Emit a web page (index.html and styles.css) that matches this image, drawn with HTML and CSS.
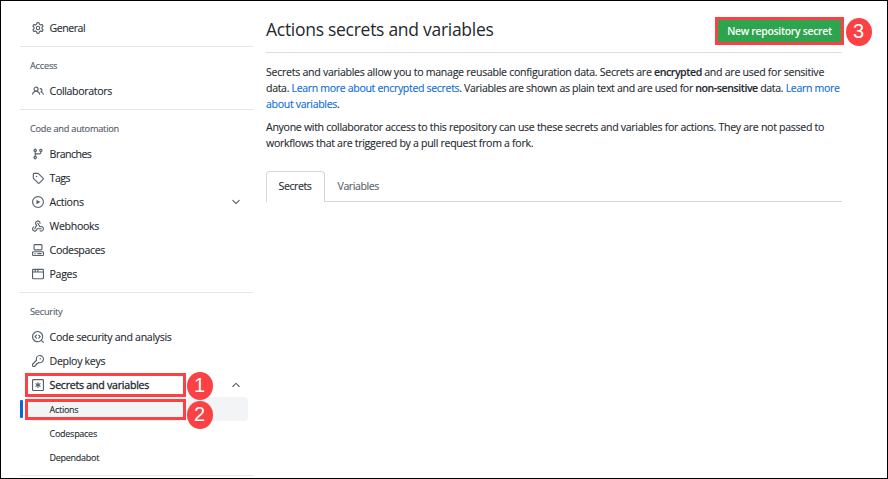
FILE: index.html
```html
<!DOCTYPE html>
<html lang="en">
<head>
<meta charset="utf-8">
<title>Actions secrets and variables</title>
<link rel="stylesheet" href="styles.css">
</head>
<body>
<div class="page">
  <nav class="sidebar">
    <ul class="list">
      <li class="item"><svg class="icon" viewBox="0 0 16 16"><path d="M8 0a8.2 8.2 0 0 1 .701.031C9.444.095 9.99.645 10.16 1.29l.288 1.107c.018.066.079.158.212.224.231.114.454.243.668.386.123.082.233.09.299.071l1.103-.303c.644-.176 1.392.021 1.82.63.27.385.506.792.704 1.218.315.675.111 1.422-.364 1.891l-.814.806c-.049.048-.098.147-.088.294.016.257.016.515 0 .772-.01.147.038.246.088.294l.814.806c.475.469.679 1.216.364 1.891a7.977 7.977 0 0 1-.704 1.217c-.428.61-1.176.807-1.82.63l-1.102-.302c-.067-.019-.177-.011-.3.071a5.909 5.909 0 0 1-.668.386c-.133.066-.194.158-.211.224l-.29 1.106c-.168.646-.715 1.196-1.458 1.26a8.006 8.006 0 0 1-1.402 0c-.743-.064-1.289-.614-1.458-1.26l-.289-1.106c-.018-.066-.079-.158-.212-.224a5.738 5.738 0 0 1-.668-.386c-.123-.082-.233-.09-.299-.071l-1.103.303c-.644.176-1.392-.021-1.82-.63a8.12 8.12 0 0 1-.704-1.218c-.315-.675-.111-1.422.363-1.891l.815-.806c.05-.048.098-.147.088-.294a6.214 6.214 0 0 1 0-.772c.01-.147-.038-.246-.088-.294l-.815-.806C.635 6.045.431 5.298.746 4.623a7.92 7.92 0 0 1 .704-1.217c.428-.61 1.176-.807 1.82-.63l1.102.302c.067.019.177.011.3-.071.214-.143.437-.272.668-.386.133-.066.194-.158.211-.224l.29-1.106C6.009.645 6.556.095 7.299.03 7.53.01 7.764 0 8 0Zm-.571 1.525c-.036.003-.108.036-.137.146l-.289 1.105c-.147.561-.549.967-.998 1.189-.173.086-.34.183-.5.29-.417.278-.97.423-1.529.27l-1.103-.303c-.109-.03-.175.016-.195.045-.22.312-.412.644-.573.99-.014.031-.021.11.059.19l.815.806c.411.406.562.957.53 1.456a4.709 4.709 0 0 0 0 .582c.032.499-.119 1.05-.53 1.456l-.815.806c-.081.08-.073.159-.059.19.162.346.353.677.573.989.02.03.085.076.195.046l1.102-.303c.56-.153 1.113-.008 1.53.27.161.107.328.204.501.29.447.222.85.629.997 1.189l.289 1.105c.029.109.101.143.137.146a6.6 6.6 0 0 0 1.142 0c.036-.003.108-.036.137-.146l.289-1.105c.147-.561.549-.967.998-1.189.173-.086.34-.183.5-.29.417-.278.97-.423 1.529-.27l1.103.303c.109.029.175-.016.195-.045.22-.313.411-.644.573-.99.014-.031.021-.11-.059-.19l-.815-.806c-.411-.406-.562-.957-.53-1.456a4.709 4.709 0 0 0 0-.582c-.032-.499.119-1.05.53-1.456l.815-.806c.081-.08.073-.159.059-.19a6.464 6.464 0 0 0-.573-.989c-.02-.03-.085-.076-.195-.046l-1.102.303c-.56.153-1.113.008-1.53-.27a4.44 4.44 0 0 0-.501-.29c-.447-.222-.85-.629-.997-1.189l-.289-1.105c-.029-.11-.101-.143-.137-.146a6.6 6.6 0 0 0-1.142 0ZM11 8a3 3 0 1 1-6 0 3 3 0 0 1 6 0ZM9.5 8a1.5 1.5 0 1 0-3.001.001A1.5 1.5 0 0 0 9.5 8Z"/></svg><span class="label t-general">General</span></li>
    </ul>
    <section class="group">
      <h2 class="heading t-access">Access</h2>
      <ul class="list">
        <li class="item"><svg class="icon" viewBox="0 0 16 16"><path d="M2 5.5a3.5 3.5 0 1 1 5.898 2.549 5.508 5.508 0 0 1 3.034 4.084.75.75 0 1 1-1.482.235 4 4 0 0 0-7.9 0 .75.75 0 0 1-1.482-.236A5.507 5.507 0 0 1 3.102 8.05 3.493 3.493 0 0 1 2 5.5ZM11 4a3.001 3.001 0 0 1 2.22 5.018 5.01 5.01 0 0 1 2.56 3.012.749.749 0 0 1-.885.954.752.752 0 0 1-.549-.514 3.507 3.507 0 0 0-2.522-2.372.75.75 0 0 1-.574-.73v-.352a.75.75 0 0 1 .416-.672A1.5 1.5 0 0 0 11 5.5.75.75 0 0 1 11 4Zm-5.5-.5a2 2 0 1 0-.001 3.999A2 2 0 0 0 5.5 3.5Z"/></svg><span class="label t-collab">Collaborators</span></li>
      </ul>
    </section>
    <section class="group">
      <h2 class="heading t-code">Code and automation</h2>
      <ul class="list">
        <li class="item"><svg class="icon" viewBox="0 0 16 16"><path d="M9.5 3.25a2.25 2.25 0 1 1 3 2.122V6A2.5 2.5 0 0 1 10 8.5H6a1 1 0 0 0-1 1v1.128a2.251 2.251 0 1 1-1.5 0V5.372a2.25 2.25 0 1 1 1.5 0v1.836A2.493 2.493 0 0 1 6 7h4a1 1 0 0 0 1-1v-.628A2.25 2.25 0 0 1 9.5 3.25Zm-6 0a.75.75 0 1 0 1.5 0 .75.75 0 0 0-1.5 0Zm8.25-.75a.75.75 0 1 0 0 1.5.75.75 0 0 0 0-1.5ZM4.25 12a.75.75 0 1 0 0 1.5.75.75 0 0 0 0-1.5Z"/></svg><span class="label t-branches">Branches</span></li>
        <li class="item"><svg class="icon" viewBox="0 0 16 16"><path d="M1 7.775V2.75C1 1.784 1.784 1 2.75 1h5.025c.464 0 .91.184 1.238.513l6.25 6.25a1.75 1.75 0 0 1 0 2.474l-5.026 5.026a1.75 1.75 0 0 1-2.474 0l-6.25-6.25A1.752 1.752 0 0 1 1 7.775Zm1.5 0c0 .066.026.13.073.177l6.25 6.25a.25.25 0 0 0 .354 0l5.025-5.025a.25.25 0 0 0 0-.354l-6.25-6.25a.25.25 0 0 0-.177-.073H2.75a.25.25 0 0 0-.25.25ZM6 5a1 1 0 1 1 0 2 1 1 0 0 1 0-2Z"/></svg><span class="label t-tags">Tags</span></li>
        <li class="item"><svg class="icon" viewBox="0 0 16 16"><path d="M8 0a8 8 0 1 1 0 16A8 8 0 0 1 8 0ZM1.5 8a6.5 6.5 0 1 0 13 0 6.5 6.5 0 0 0-13 0Zm4.879-2.773 4.264 2.559a.25.25 0 0 1 0 .428l-4.264 2.559A.25.25 0 0 1 6 10.559V5.442a.25.25 0 0 1 .379-.215Z"/></svg><span class="label t-actions">Actions</span><svg class="icon chevron" viewBox="0 0 16 16"><path d="M12.78 5.22a.749.749 0 0 1 0 1.06l-4.25 4.25a.749.749 0 0 1-1.06 0L3.22 6.28a.749.749 0 1 1 1.06-1.06L8 8.939l3.72-3.719a.749.749 0 0 1 1.06 0Z"/></svg></li>
        <li class="item"><svg class="icon" viewBox="0 0 16 16"><path d="M5.5 4.25a2.25 2.25 0 0 1 4.5 0 .75.75 0 0 0 1.5 0 3.75 3.75 0 1 0-6.14 2.889l-2.272 4.258a.75.75 0 0 0 1.324.706L7 7.25a.75.75 0 0 0-.309-1.015A2.25 2.25 0 0 1 5.5 4.25Z"/><path d="M7.364 3.607a.75.75 0 0 1 1.03.257l2.608 4.349a3.75 3.75 0 1 1-.628 6.785.75.75 0 0 1 .752-1.299 2.25 2.25 0 1 0-.033-3.88.75.75 0 0 1-1.03-.256L7.107 4.636a.75.75 0 0 1 .257-1.03Z"/><path d="M2.9 8.776A.75.75 0 0 1 2.625 9.8 2.25 2.25 0 1 0 6 11.75a.75.75 0 0 1 .75-.751h5.5a.75.75 0 0 1 0 1.5H7.425a3.751 3.751 0 1 1-5.55-3.998.75.75 0 0 1 1.024.274Z"/></svg><span class="label t-webhooks">Webhooks</span></li>
        <li class="item"><svg class="icon" viewBox="0 0 16 16"><path d="M0 11.25c0-.966.784-1.75 1.75-1.75h12.5c.966 0 1.75.784 1.75 1.75v3A1.75 1.75 0 0 1 14.25 16H1.75A1.75 1.75 0 0 1 0 14.25Zm2-9.5C2 .784 2.784 0 3.75 0h8.5C13.216 0 14 .784 14 1.75v5a1.75 1.75 0 0 1-1.75 1.75h-8.5A1.75 1.75 0 0 1 2 6.75Zm1.75-.25a.25.25 0 0 0-.25.25v5c0 .138.112.25.25.25h8.5a.25.25 0 0 0 .25-.25v-5a.25.25 0 0 0-.25-.25Zm-2 9.5a.25.25 0 0 0-.25.25v3c0 .138.112.25.25.25h12.5a.25.25 0 0 0 .25-.25v-3a.25.25 0 0 0-.25-.25Z"/><path d="M7 12.75a.75.75 0 0 1 .75-.75h4.5a.75.75 0 0 1 0 1.5h-4.5a.75.75 0 0 1-.75-.75Zm-4 0a.75.75 0 0 1 .75-.75h.5a.75.75 0 0 1 0 1.5h-.5a.75.75 0 0 1-.75-.75Z"/></svg><span class="label t-codespaces">Codespaces</span></li>
        <li class="item"><svg class="icon" viewBox="0 0 16 16"><path d="M0 2.75C0 1.784.784 1 1.75 1h12.5c.966 0 1.75.784 1.75 1.75v10.5A1.75 1.75 0 0 1 14.25 15H1.75A1.75 1.75 0 0 1 0 13.25ZM14.5 6h-13v7.25c0 .138.112.25.25.25h12.5a.25.25 0 0 0 .25-.25Zm-6-3.5v2h6V2.75a.25.25 0 0 0-.25-.25ZM5 2.5v2h2v-2Zm-3.25 0a.25.25 0 0 0-.25.25V4.5h2v-2Z"/></svg><span class="label t-pages">Pages</span></li>
      </ul>
    </section>
    <section class="group">
      <h2 class="heading t-security">Security</h2>
      <ul class="list">
        <li class="item"><svg class="icon" viewBox="0 0 16 16"><path d="M8.47 4.97a.75.75 0 0 0 0 1.06L9.94 7.5 8.47 8.97a.75.75 0 1 0 1.06 1.06l2-2a.75.75 0 0 0 0-1.06l-2-2a.75.75 0 0 0-1.06 0ZM6.53 6.03a.75.75 0 0 0-1.06-1.06l-2 2a.75.75 0 0 0 0 1.06l2 2a.75.75 0 1 0 1.06-1.06L5.06 7.5l1.47-1.47Z"/><path d="M12.246 13.307a7.501 7.501 0 1 1 1.06-1.06l2.474 2.473a.749.749 0 1 1-1.06 1.06l-2.474-2.473ZM1.5 7.5a6.002 6.002 0 0 0 3.608 5.504 6.002 6.002 0 0 0 6.486-1.117.748.748 0 0 1 .292-.293A6 6 0 1 0 1.5 7.5Z"/></svg><span class="label t-analysis">Code security and analysis</span></li>
        <li class="item"><svg class="icon" viewBox="0 0 16 16"><path d="M10.5 0a5.499 5.499 0 1 1-1.288 10.848l-.932.932a.749.749 0 0 1-.53.22H7v.75a.749.749 0 0 1-.22.53l-.5.5a.749.749 0 0 1-.53.22H5v.75a.749.749 0 0 1-.22.53l-.5.5a.749.749 0 0 1-.53.22h-2A1.75 1.75 0 0 1 0 14.25v-2c0-.199.079-.389.22-.53l4.932-4.932A5.5 5.5 0 0 1 10.5 0Zm-4 5.5c-.001.431.069.86.205 1.269a.75.75 0 0 1-.181.768L1.5 12.56v1.69c0 .138.112.25.25.25h1.69l.06-.06v-1.19a.75.75 0 0 1 .75-.75h1.19l.06-.06v-1.19a.75.75 0 0 1 .75-.75h1.19l1.023-1.025a.75.75 0 0 1 .768-.18A4 4 0 1 0 6.5 5.5ZM11 6a1 1 0 1 1 0-2 1 1 0 0 1 0 2Z"/></svg><span class="label t-deploy">Deploy keys</span></li>
        <li class="item item-open"><svg class="icon" viewBox="0 0 16 16"><path fill-rule="evenodd" d="M1.75 0h12.5C15.216 0 16 .784 16 1.75v12.5A1.75 1.75 0 0 1 14.25 16H1.75A1.75 1.75 0 0 1 0 14.25V1.75C0 .784.784 0 1.75 0Zm0 1.5a.25.25 0 0 0-.25.25v12.5c0 .138.112.25.25.25h12.5a.25.25 0 0 0 .25-.25V1.75a.25.25 0 0 0-.25-.25Z"/><path d="M8 4a.75.75 0 0 1 .75.75V6.7l1.69-.975a.75.75 0 0 1 .75 1.3L9.5 8l1.69.976a.75.75 0 0 1-.75 1.298L8.75 9.3v1.951a.75.75 0 0 1-1.5 0V9.299l-1.69.976a.75.75 0 0 1-.75-1.3L6.5 8l-1.69-.975a.75.75 0 0 1 .75-1.3l1.69.976V4.75A.75.75 0 0 1 8 4Z"/></svg><span class="label t-secrets">Secrets and variables</span><svg class="icon chevron" viewBox="0 0 16 16"><path d="M3.22 10.53a.749.749 0 0 1 0-1.06l4.25-4.25a.749.749 0 0 1 1.06 0l4.25 4.25a.749.749 0 1 1-1.06 1.06L8 6.811 4.28 10.53a.749.749 0 0 1-1.06 0Z"/></svg></li>
        <li class="subitem subitem-current"><span>Actions</span></li>
        <li class="subitem"><span>Codespaces</span></li>
        <li class="subitem"><span>Dependabot</span></li>
      </ul>
    </section>
    <div class="group"></div>
  </nav>
  <main class="main">
    <header class="header">
      <h1 class="title">Actions secrets and variables</h1>
      <button class="button">New repository secret</button>
    </header>
    <p class="text"><span class="l1">Secrets and variables allow you to manage reusable configuration data. Secrets are <b>encrypted</b> and are used for sensitive</span><br><span class="l2">data. <a>Learn more about encrypted secrets</a>. Variables are shown as plain text and are used for <b>non-sensitive</b> data. <a>Learn more</a></span><br><span class="l3"><a>about variables</a>.</span></p>
    <p class="text"><span class="l4">Anyone with collaborator access to this repository can use these secrets and variables for actions. They are not passed to</span><br><span class="l4">workflows that are triggered by a pull request from a fork.</span></p>
    <div class="tabs"><div class="tab tab-current">Secrets</div><div class="tab">Variables</div></div>
  </main>
  <div class="frame frame-1"></div>
  <div class="frame frame-2"></div>
  <div class="frame frame-3"></div>
  <div class="badge badge-1">1</div>
  <div class="badge badge-2">2</div>
  <div class="badge badge-3">3</div>
</div>
</body>
</html>
```
FILE: styles.css
```css
* { box-sizing: border-box; }
body { margin: 0; background: #fff; }
.page {
  position: relative;
  display: flex;
  width: 888px;
  height: 479px;
  overflow: hidden;
  border: 1px solid #000;
  background: #fff;
  color: #24292f;
  font-family: "Open Sans", "Noto Sans", sans-serif;
  font-size: 10.6px;
}
.sidebar { width: 233px; margin: 15px 13px 0 19px; flex: none; }
.list { list-style: none; margin: 0; padding: 0; }
.item { display: flex; align-items: center; height: 24px; padding: 0 11px 0 12px; white-space: nowrap; letter-spacing: -0.35px; }
.icon { width: 12px; height: 12px; margin-right: 5.6px; fill: #57606a; flex: none; }
.label { line-height: 24px; -webkit-text-stroke: 0.1px #24292f; }
.t-general { letter-spacing: -0.5px; }
.t-branches { letter-spacing: -0.55px; }
.t-tags { letter-spacing: -0.5px; }
.t-actions { letter-spacing: -0.3px; }
.t-analysis, .t-deploy { letter-spacing: -0.32px; }
.t-secrets { letter-spacing: -0.24px; -webkit-text-stroke: 0.3px #24292f; }
.chevron { margin: 0 0 0 auto; }
.group { margin-top: 6px; border-top: 1px solid #e4e7ea; padding-top: 7px; }
.heading { margin: 0; height: 25px; padding-left: 10px; font-size: 9.2px; line-height: 24px; font-weight: 500; color: #57606a; letter-spacing: -0.22px; white-space: nowrap; -webkit-text-stroke: 0.15px #57606a; }
.subitem { display: flex; align-items: center; position: relative; height: 24px; margin-right: 5px; padding-left: 29.6px; font-size: 9px; letter-spacing: -0.28px; -webkit-text-stroke: 0.1px #24292f; }
.subitem-current { background: #f3f4f6; border-radius: 4px; margin-left: 6px; padding-left: 23.6px; }
.subitem-current::before { content: ""; position: absolute; left: -6px; top: 3px; width: 3px; height: 18px; border-radius: 1px; background: #0969da; }
.main { width: 576px; flex: none; }
.header { display: flex; align-items: center; justify-content: space-between; height: 52px; padding-top: 8px; border-bottom: 1px solid #d8dee4; }
.title { margin: 0; padding-bottom: 3px; font-size: 17.5px; font-weight: 400; letter-spacing: -0.28px; white-space: nowrap; }
.button { width: 123px; height: 22px; margin-right: 1px; padding: 0; border: 0; background: #2da44e; color: #fff; font: 600 10.4px "Open Sans", "Noto Sans", sans-serif; letter-spacing: -0.28px; white-space: nowrap; }
.text { margin: 11px 0 0; line-height: 16px; white-space: nowrap; -webkit-text-stroke: 0.1px; }
.text + .text { margin-top: 7px; }
.l1 { letter-spacing: -0.285px; }
.l2 { letter-spacing: -0.35px; }
.l3 { letter-spacing: -0.33px; }
.l4 { letter-spacing: -0.312px; }
.text b { font-weight: 600; letter-spacing: -0.45px; }
.text a { color: #0969da; }
.tabs { display: flex; height: 31px; margin-top: 20px; border-bottom: 1px solid #d0d7de; }
.tab { height: 30px; padding: 0 12.5px; line-height: 30px; color: #57606a; letter-spacing: -0.42px; -webkit-text-stroke: 0.1px; }
.tab-current { width: 59px; height: 31px; padding: 0 11.5px; border: 1px solid #d0d7de; border-bottom: 0; border-radius: 4px 4px 0 0; background: #fff; color: #24292f; line-height: 28px; }
.frame { position: absolute; border: 3px solid #fb4144; }
.frame-1 { left: 24px; top: 372px; width: 161px; height: 24px; }
.frame-2 { left: 24px; top: 398px; width: 161px; height: 21px; }
.frame-3 { left: 714px; top: 16px; width: 129px; height: 28px; }
.badge { position: absolute; width: 26px; height: 28px; border-radius: 50%; background: #fb4144; color: #fff; font: 20px/27px "Liberation Sans", Arial, sans-serif; text-align: center; }
.badge-1 { left: 185.6px; top: 370.6px; }
.badge-2 { left: 185.6px; top: 399.6px; }
.badge-3 { left: 844.6px; top: 16.6px; }
```
